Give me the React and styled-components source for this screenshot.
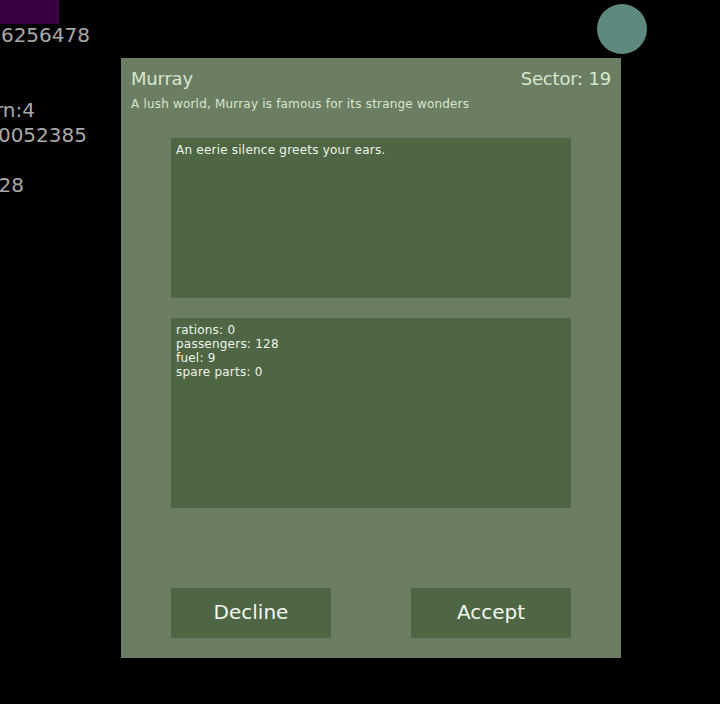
import React from "react";
import styled, { createGlobalStyle } from "styled-components";

const Global = createGlobalStyle`
  html, body { margin: 0; padding: 0; background: #000; }
  body { font-family: "DejaVu Sans", "Liberation Sans", sans-serif; overflow: hidden; }
  #root { width: 720px; height: 704px; }
`;

const Stage = styled.div`
  position: relative;
  width: 720px;
  height: 704px;
  background: #000;
  overflow: hidden;
`;

const Swatch = styled.div`
  position: absolute;
  left: 0;
  top: 0;
  width: 59px;
  height: 24px;
  background: #3a0041;
`;

const Hud = styled.div`
  position: absolute;
  left: 0;
  top: 23px;
  width: 90px;
  display: flex;
  flex-direction: column;
`;

const HudLine = styled.div`
  display: flex;
  justify-content: flex-end;
  width: ${(p) => p.$w}px;
  height: 25px;
  line-height: 25px;
  font-size: 20px;
  color: #a9a9a9;
  white-space: nowrap;
`;

const Planet = styled.div`
  position: absolute;
  left: 597px;
  top: 4px;
  width: 50px;
  height: 50px;
  border-radius: 50%;
  background: #5e897e;
`;

const PlanetLabel = styled.div`
  position: absolute;
  left: 621px;
  top: -10px;
  font-size: 10px;
  line-height: 12px;
  color: #bbbbbb;
`;

const Panel = styled.div`
  position: absolute;
  left: 121px;
  top: 58px;
  width: 500px;
  height: 600px;
  background: #6b7e64;
  display: flex;
  flex-direction: column;
  box-sizing: border-box;
`;

const Header = styled.div`
  padding: 10px 10px 0;
  color: #d6e7cf;
`;

const TitleRow = styled.div`
  display: flex;
  justify-content: space-between;
  font-size: 18px;
  line-height: 21px;
  letter-spacing: -0.2px;
`;

const Subtitle = styled.div`
  margin-top: 8px;
  font-size: 12px;
  line-height: 14px;
  letter-spacing: 0.19px;
`;

const Body = styled.div`
  width: 400px;
  margin: 27px auto 0;
  display: flex;
  flex-direction: column;
`;

const TextBox = styled.div`
  height: ${(p) => p.$h}px;
  margin-top: ${(p) => p.$mt || 0}px;
  background: #4e6644;
  box-sizing: border-box;
  padding: ${(p) => p.$pt}px 5px;
  color: #f0f3ec;
  font-size: 12px;
  line-height: 14px;
  letter-spacing: 0.22px;
`;

const ButtonRow = styled.div`
  margin-top: 80px;
  display: flex;
  justify-content: space-between;
`;

const Button = styled.button`
  width: 160px;
  height: 50px;
  border: none;
  padding: 0 0 2px;
  background: #4e6644;
  color: #f4f6f2;
  font-family: "DejaVu Sans", sans-serif;
  font-size: 20px;
  line-height: 48px;
  cursor: pointer;
`;

const cargo = [
  ["rations", 0],
  ["passengers", 128],
  ["fuel", 9],
  ["spare parts", 0],
];

export default function App() {
  return (
    <Stage>
      <Global />
      <Swatch />
      <Hud>
        <HudLine $w={90}>6256478</HudLine>
        <HudLine $w={90}></HudLine>
        <HudLine $w={90}></HudLine>
        <HudLine $w={35}>rn:4</HudLine>
        <HudLine $w={87}>0052385</HudLine>
        <HudLine $w={90}></HudLine>
        <HudLine $w={24}>28</HudLine>
      </Hud>
      <PlanetLabel>Phoenix</PlanetLabel>
      <Planet />
      <Panel>
        <Header>
          <TitleRow>
            <span>Murray</span>
            <span>Sector: 19</span>
          </TitleRow>
          <Subtitle>A lush world, Murray is famous for its strange wonders</Subtitle>
        </Header>
        <Body>
          <TextBox $h={160} $pt={5}>An eerie silence greets your ears.</TextBox>
          <TextBox $h={190} $mt={20} $pt={5}>
            {cargo.map(([k, v]) => (
              <div key={k}>
                {k}: {v}
              </div>
            ))}
          </TextBox>
          <ButtonRow>
            <Button>Decline</Button>
            <Button>Accept</Button>
          </ButtonRow>
        </Body>
      </Panel>
    </Stage>
  );
}
